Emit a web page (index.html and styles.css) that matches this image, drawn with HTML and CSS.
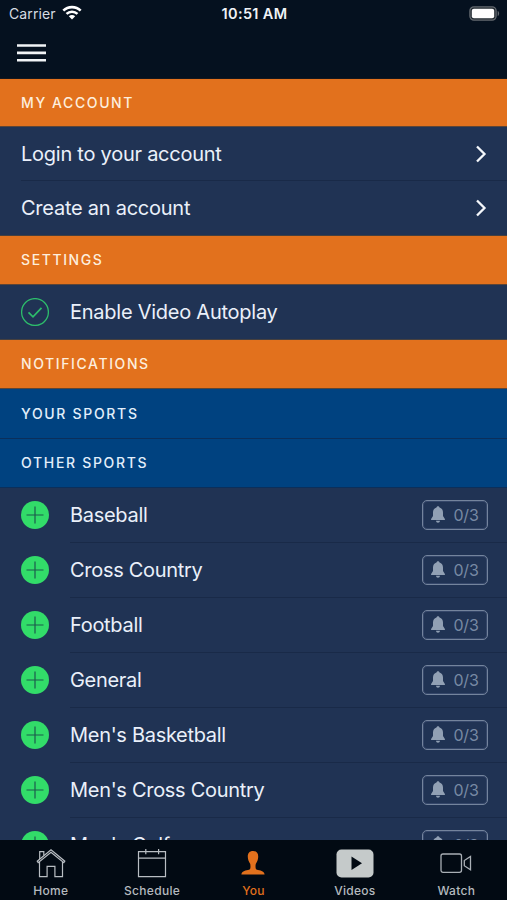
FILE: index.html
```html
<!DOCTYPE html>
<html lang="en">
<head>
<meta charset="utf-8">
<title>You</title>
<link rel="stylesheet" href="styles.css">
</head>
<body>
<svg width="0" height="0" class="defs">
  <symbol id="plus" viewBox="0 0 28 28"><circle cx="14" cy="14" r="14" fill="#32dc69"/><path d="M5.500 14h17M14 5.500v17" stroke="#1d5b4d" stroke-width="1.200"/></symbol>
  <symbol id="bell" viewBox="0 0 14 17"><path d="M7 0.200c.9 0 1.400.6 1.500 1.300C10.700 2.100 12 4 12 6.400V10l1.900 3v1H.1v-1L2 10V6.400C2 4 3.300 2.100 5.500 1.500 5.600.8 6.100.2 7 .2zM5 14.700h4c-.1 1.200-.9 2-2 2s-1.900-.8-2-2z" fill="#91a0b4"/></symbol>
  <symbol id="chevron" viewBox="0 0 12 18"><path d="M2 1.500l7.500 7.500L2 16.500" fill="none" stroke="#f4f7fb" stroke-width="2.300"/></symbol>
</svg>
<div class="app">
  <header class="top">
    <div class="status">
      <div class="carrier"><span>Carrier</span>
        <svg width="20" height="15" viewBox="0 0 20 15"><g fill="none" stroke="#fff" stroke-width="2.600"><path d="M1.300 5.600C6.200.9 13.800.9 18.700 5.600"/><path d="M4.500 8.900c3.100-2.900 7.900-2.900 11 0"/></g><path d="M6.800 11.200c1.800-1.700 4.600-1.700 6.400 0L10 14.400z" fill="#fff"/></svg>
      </div>
      <div class="clock">10:51 AM</div>
      <svg class="battery" width="31" height="15" viewBox="0 0 31 15"><rect x=".9" y=".9" width="26.200" height="13.200" rx="4" fill="#20282f" stroke="#646a70" stroke-width="1.300"/><rect x="2.800" y="2.800" width="22.400" height="9.400" rx="2" fill="#fff"/><path d="M28.700 5c1.900.6 1.900 4.400 0 5z" fill="#646a70"/></svg>
    </div>
    <svg class="menu" width="29" height="18" viewBox="0 0 29 18"><path d="M0 1.500h29M0 8.900h29M0 16.300h29" stroke="#f1f4f6" stroke-width="2.600"/></svg>
  </header>
  <main class="content">
    <h2 class="section section-account">MY ACCOUNT</h2>
    <div class="link"><span>Login to your account</span><svg width="12" height="18"><use href="#chevron"/></svg></div>
    <div class="link link-last"><span>Create an account</span><svg width="12" height="18"><use href="#chevron"/></svg></div>
    <h2 class="section section-settings">SETTINGS</h2>
    <div class="setting">
      <svg class="mark" width="28" height="28" viewBox="0 0 28 28"><g fill="none" stroke="#2dbd6b"><circle cx="14" cy="14" r="13.400" stroke-width="1.300"/><path d="M7.500 14.400l4.500 4.400 8.500-9" stroke-width="1.700"/></g></svg>
      <span>Enable Video Autoplay</span>
    </div>
    <h2 class="section section-notifications">NOTIFICATIONS</h2>
    <h3 class="section sub sub-yours">YOUR SPORTS</h3>
    <h3 class="section sub">OTHER SPORTS</h3>
    <div class="sport"><svg class="mark" width="28" height="28"><use href="#plus"/></svg><div class="body"><span>Baseball</span><div class="badge"><svg width="14" height="17"><use href="#bell"/></svg>0/3</div></div></div>
    <div class="sport"><svg class="mark" width="28" height="28"><use href="#plus"/></svg><div class="body"><span>Cross Country</span><div class="badge"><svg width="14" height="17"><use href="#bell"/></svg>0/3</div></div></div>
    <div class="sport"><svg class="mark" width="28" height="28"><use href="#plus"/></svg><div class="body"><span>Football</span><div class="badge"><svg width="14" height="17"><use href="#bell"/></svg>0/3</div></div></div>
    <div class="sport"><svg class="mark" width="28" height="28"><use href="#plus"/></svg><div class="body"><span>General</span><div class="badge"><svg width="14" height="17"><use href="#bell"/></svg>0/3</div></div></div>
    <div class="sport"><svg class="mark" width="28" height="28"><use href="#plus"/></svg><div class="body"><span>Men's Basketball</span><div class="badge"><svg width="14" height="17"><use href="#bell"/></svg>0/3</div></div></div>
    <div class="sport"><svg class="mark" width="28" height="28"><use href="#plus"/></svg><div class="body"><span>Men's Cross Country</span><div class="badge"><svg width="14" height="17"><use href="#bell"/></svg>0/3</div></div></div>
    <div class="sport"><svg class="mark" width="28" height="28"><use href="#plus"/></svg><div class="body"><span>Men's Golf</span><div class="badge"><svg width="14" height="17"><use href="#bell"/></svg>0/3</div></div></div>
  </main>
  <nav class="tabs">
    <div class="tab"><svg width="30" height="30" viewBox="0 0 30 30"><g fill="none" stroke="#b9bec3" stroke-width="1.200"><path d="M3.500 13v14.600h7.600V17.400h7.800v10.200h7.600V13"/><path d="M1.200 12.200L15 .9l13.800 11.300-1 1.500L15 3.300 2.200 13.700z"/><path d="M3.700 9.900V2.600h4.100v4"/></g></svg><span>Home</span></div>
    <div class="tab"><svg width="30" height="30" viewBox="0 0 30 30"><g fill="none" stroke="#b9bec3" stroke-width="1.200"><path d="M1.500 2.600h27v25h-27zM1.500 9.200h27M8.800 0v5.200M21.600 0v5.200"/></g></svg><span>Schedule</span></div>
    <div class="tab active"><svg width="30" height="30" viewBox="0 0 30 30"><path d="M15 2c3.600 0 5.400 2.400 5.200 6-.1 2.600-.9 4.400-2.200 6.400-.5 1-.6 3.600-.3 4.900.2 1 1 1.500 2.300 1.800 3.700.8 6.400 1.500 6.600 4.500H3.400c.2-3 2.900-3.700 6.600-4.500 1.300-.3 2.100-.8 2.300-1.800.3-1.300.2-3.900-.3-4.900-1.300-2-2.100-3.800-2.200-6.400C9.600 4.400 11.400 2 15 2z" fill="#e2711d"/></svg><span>You</span></div>
    <div class="tab"><svg width="38" height="30" viewBox="0 0 38 30"><rect x=".5" y=".5" width="37" height="28" rx="5" fill="#c5caca"/><path d="M15.500 7.500v13.500l10.500-6.700z" fill="#020a13"/></svg><span>Videos</span></div>
    <div class="tab"><svg width="32" height="30" viewBox="0 0 32 30"><g fill="none" stroke="#a9afb5" stroke-width="1.300"><rect x="1" y="5" width="20.500" height="18.300" rx="2"/><path d="M30.500 7.500v13.200l-6.200-4v-5.200z"/></g></svg><span>Watch</span></div>
  </nav>
</div>
</body>
</html>
```
FILE: styles.css
```css
* { box-sizing: border-box; }
body { margin: 0; background: #020a13; font-family: Inter, "Liberation Sans", sans-serif; color: #eaf0fa; }
svg { display: block; flex: none; }
.defs { position: absolute; }
.app { width: 507px; height: 900px; display: flex; flex-direction: column; overflow: hidden; }
.top { height: 79px; flex: none; background: #05111f; border-bottom: 1px solid #16171c; }
.status { height: 27px; padding: 0 7px 0 9px; display: grid; grid-template-columns: 1fr auto 1fr; align-items: center; font-size: 14px; }
.carrier { display: flex; align-items: center; gap: 6px; color: #d7dce2; letter-spacing: 0.1px; }
.carrier svg { margin-top: -2px; }
.clock { font-weight: 600; font-size: 14.5px; color: #f0f3f6; letter-spacing: 0.35px; }
.battery { justify-self: end; margin-top: -1px; }
.menu { margin: 17px 0 0 17px; }
.content { flex: 1; min-height: 0; overflow: hidden; background: #203354; font-size: 20px; letter-spacing: -0.25px; }
.section { margin: 0; height: 48px; padding-left: 21px; display: flex; align-items: center; background: #e2711d; border-bottom: 1px solid #5d4536; font-size: 14px; font-weight: 500; letter-spacing: 1.6px; color: #fdeedd; }
.section-settings, .section-notifications { height: 49px; padding-bottom: 1px; }
.sub { height: 49px; padding-bottom: 1px; background: #004280; border-color: #0b2f5b; color: #e3effb; letter-spacing: 1.68px; }
.sub-yours { height: 50px; }
.link { margin-left: 21px; height: 54px; padding-right: 20px; display: flex; align-items: center; justify-content: space-between; border-bottom: 1px solid #192a48; }
.link-last { height: 55px; border-color: #46403f; margin-left: 0; padding-left: 21px; }
.setting { height: 55px; padding-left: 21px; display: flex; align-items: center; gap: 21px; border-bottom: 1px solid #46403f; }
.sport { height: 55px; padding-left: 21px; display: flex; align-items: center; gap: 21px; letter-spacing: -0.3px; }
.sport .mark { margin-bottom: 1px; }
.body { flex: 1; height: 55px; padding-right: 19px; display: flex; align-items: center; justify-content: space-between; border-bottom: 1px solid #192a48; }
.badge { width: 66px; height: 30px; border: 1px solid #74849d; box-shadow: inset 0 0 0 1px #35476a; border-radius: 5px; display: flex; align-items: center; justify-content: center; gap: 8px; font-size: 16px; letter-spacing: -0.2px; color: #7789a3; }
.badge svg { margin-bottom: 2px; }
.tabs { height: 60px; flex: none; display: grid; grid-template-columns: repeat(5, 1fr); background: #020a13; }
.tab { padding-top: 9px; display: flex; flex-direction: column; align-items: center; font-size: 12px; font-weight: 500; line-height: 15px; letter-spacing: 0.3px; color: #b5babf; }
.tab span { margin-top: 4px; }
.active { color: #e2711d; }
```
